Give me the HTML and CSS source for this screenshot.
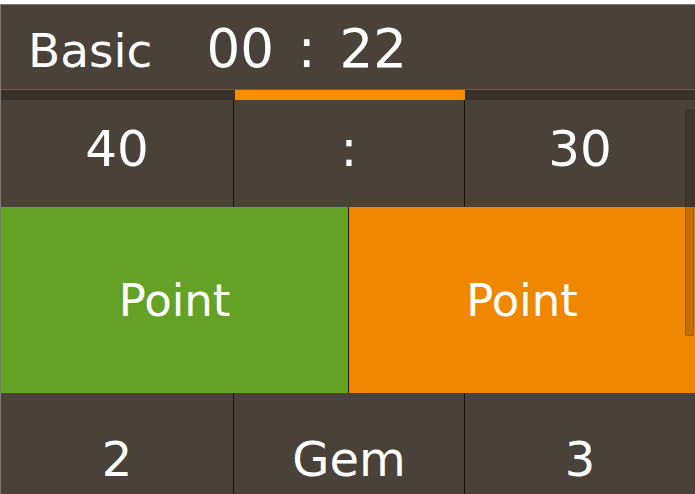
FILE: index.html
```html
<!DOCTYPE html>
<html lang="en">
<head>
  <meta charset="UTF-8" />
  <meta name="viewport" content="width=device-width, initial-scale=1" />
  <title>Score Board</title>
  <link rel="stylesheet" href="styles.css">
</head>
<body>

  <div class="board">
    <div class="topbar">
      <span class="mode">Basic</span>
      <span class="clock">00 : 22</span>
    </div>

    <!-- Tab penanda set -->
    <div class="tabs">
      <span class="tab"></span>
      <span class="tab active"></span>
      <span class="tab"></span>
    </div>

    <div class="row score-row">
      <div class="cell">40</div>
      <div class="cell">:</div>
      <div class="cell">30</div>
    </div>

    <div class="point-row">
      <button class="point home">Point</button>
      <button class="point away">Point</button>
    </div>

    <div class="row game-row">
      <div class="cell">2</div>
      <div class="cell">Gem</div>
      <div class="cell">3</div>
    </div>

    <div class="scrollbar"></div>
  </div>

</body>
</html>
```

FILE: styles.css
```css
/* Reset & base */
* {
  box-sizing: border-box;
}
body {
  font-family: 'DejaVu Sans', Verdana, sans-serif;
  background-color: #ffffff;
  margin: 0;
  padding-top: 4px;
  color: #ffffff;
  overflow: hidden;
}
.board {
  position: relative;
  background: #4a4138;
  border-top: 1px solid #7b7b7b;
  border-left: 1px solid #7b7b7b;
  height: 490px;
}
.topbar {
  display: flex;
  align-items: baseline;
  height: 85px;
  padding: 13px 0 0 27px;
  border-bottom: 1px solid #6d5b48;
}
.mode {
  font-size: 47px;
}
.clock {
  font-size: 53px;
  margin-left: 54px;
  word-spacing: 7px;
}
/* Tab */
.tabs {
  display: grid;
  grid-template-columns: 233px 231px 1fr;
  height: 10px;
  background-color: #38312a;
}
.tab.active {
  background-color: #f68e00;
  margin-left: 1px;
}
.row {
  display: grid;
  grid-template-columns: 232px 231px 1fr;
}
.cell {
  text-align: center;
  line-height: normal;
}
.cell + .cell {
  border-left: 1px solid #121212;
}
.score-row .cell {
  height: 107px;
  padding-top: 20px;
  font-size: 50px;
}
.game-row .cell {
  height: 101px;
  padding-top: 38px;
  font-size: 48px;
}
.point-row {
  display: grid;
  grid-template-columns: 348px 1fr;
  height: 186px;
}
.point {
  font-family: inherit;
  font-size: 45px;
  color: #ffffff;
  border: none;
  margin: 0;
  padding: 0;
  text-align: center;
  line-height: normal;
  width: 100%;
  height: 186px;
}
.point.home {
  background-color: #63a225;
  border-right: 1px solid #1a1a0f;
}
.point.away {
  background-color: #ef8800;
}
/* Scrollbar */
.scrollbar {
  position: absolute;
  top: 105px;
  right: 1px;
  width: 9px;
  height: 226px;
  background-color: rgba(40, 25, 10, 0.22);
  border: 1px solid rgba(0, 0, 0, 0.18);
  border-radius: 1px;
}
```
